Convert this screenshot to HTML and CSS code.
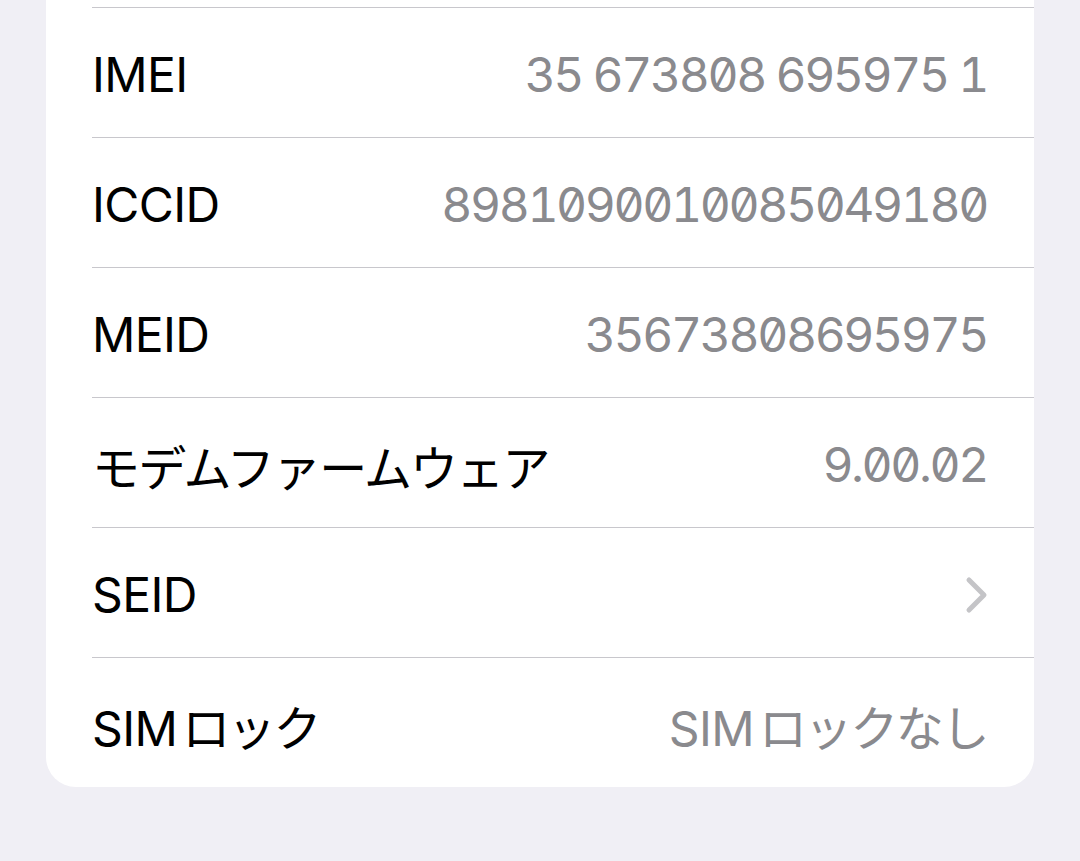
FILE: index.html
```html
<!DOCTYPE html>
<html lang="ja">
<head>
<meta charset="utf-8">
<title>情報</title>
<link rel="stylesheet" href="styles.css">
</head>
<body>
<div class="card">
  <div class="row"><div class="row-inner top-cut"></div></div>
  <div class="row"><div class="row-inner"><span class="label">IMEI</span><span class="value">35 673808 695975 1</span></div></div>
  <div class="row"><div class="row-inner"><span class="label">ICCID</span><span class="value">8981090010085049180</span></div></div>
  <div class="row"><div class="row-inner"><span class="label">MEID</span><span class="value">35673808695975</span></div></div>
  <div class="row"><div class="row-inner"><span class="label jp">モデムファームウェア</span><span class="value">9.00.02</span></div></div>
  <div class="row"><div class="row-inner"><span class="label">SEID</span>
    <svg class="chevron" width="24" height="38" viewBox="0 0 24 38"><path d="M4 4 L19 19 L4 34" fill="none" stroke="#c4c4c7" stroke-width="5" stroke-linecap="round" stroke-linejoin="round"/></svg>
  </div></div>
  <div class="row last"><div class="row-inner"><span class="label">SIM<span class="jp">ロック</span></span><span class="value-text">SIM<span class="jp">ロックなし</span></span></div></div>
</div>
</body>
</html>
```

FILE: styles.css
```css
html, body {
  margin: 0;
  padding: 0;
  background: #f0eff5;
}
body {
  height: 861px;
  overflow: hidden;
  font-family: "Inter", "Noto Sans CJK JP", sans-serif;
}
.card {
  margin: 0 46px;
  background: #ffffff;
  border-radius: 0 0 30px 30px;
}
.row {
  padding-left: 46px;
}
.row-inner {
  border-bottom: 1px solid #c8c7cc;
  padding-right: 47px;
  padding-top: 4px;
  box-sizing: border-box;
  height: 130px;
  display: flex;
  align-items: center;
  justify-content: space-between;
}
.row-inner.top-cut {
  height: 8px;
  padding: 0;
}
.row.last .row-inner {
  border-bottom: none;
  height: 129px;
}
.label {
  font-size: 48px;
  color: #000000;
  letter-spacing: -0.6px;
}
.value {
  font-size: 48px;
  color: #8a8a8e;
  font-feature-settings: "tnum" 1, "zero" 1;
  letter-spacing: -2.4px;
}
.value-text {
  font-size: 48px;
  color: #8a8a8e;
  letter-spacing: -0.6px;
}
.jp {
  letter-spacing: -2.4px;
  margin-left: 5px;
}
.label.jp {
  margin-left: 0;
  letter-spacing: -1.8px;
}
.chevron {
  display: block;
  margin-right: -2px;
}
```
